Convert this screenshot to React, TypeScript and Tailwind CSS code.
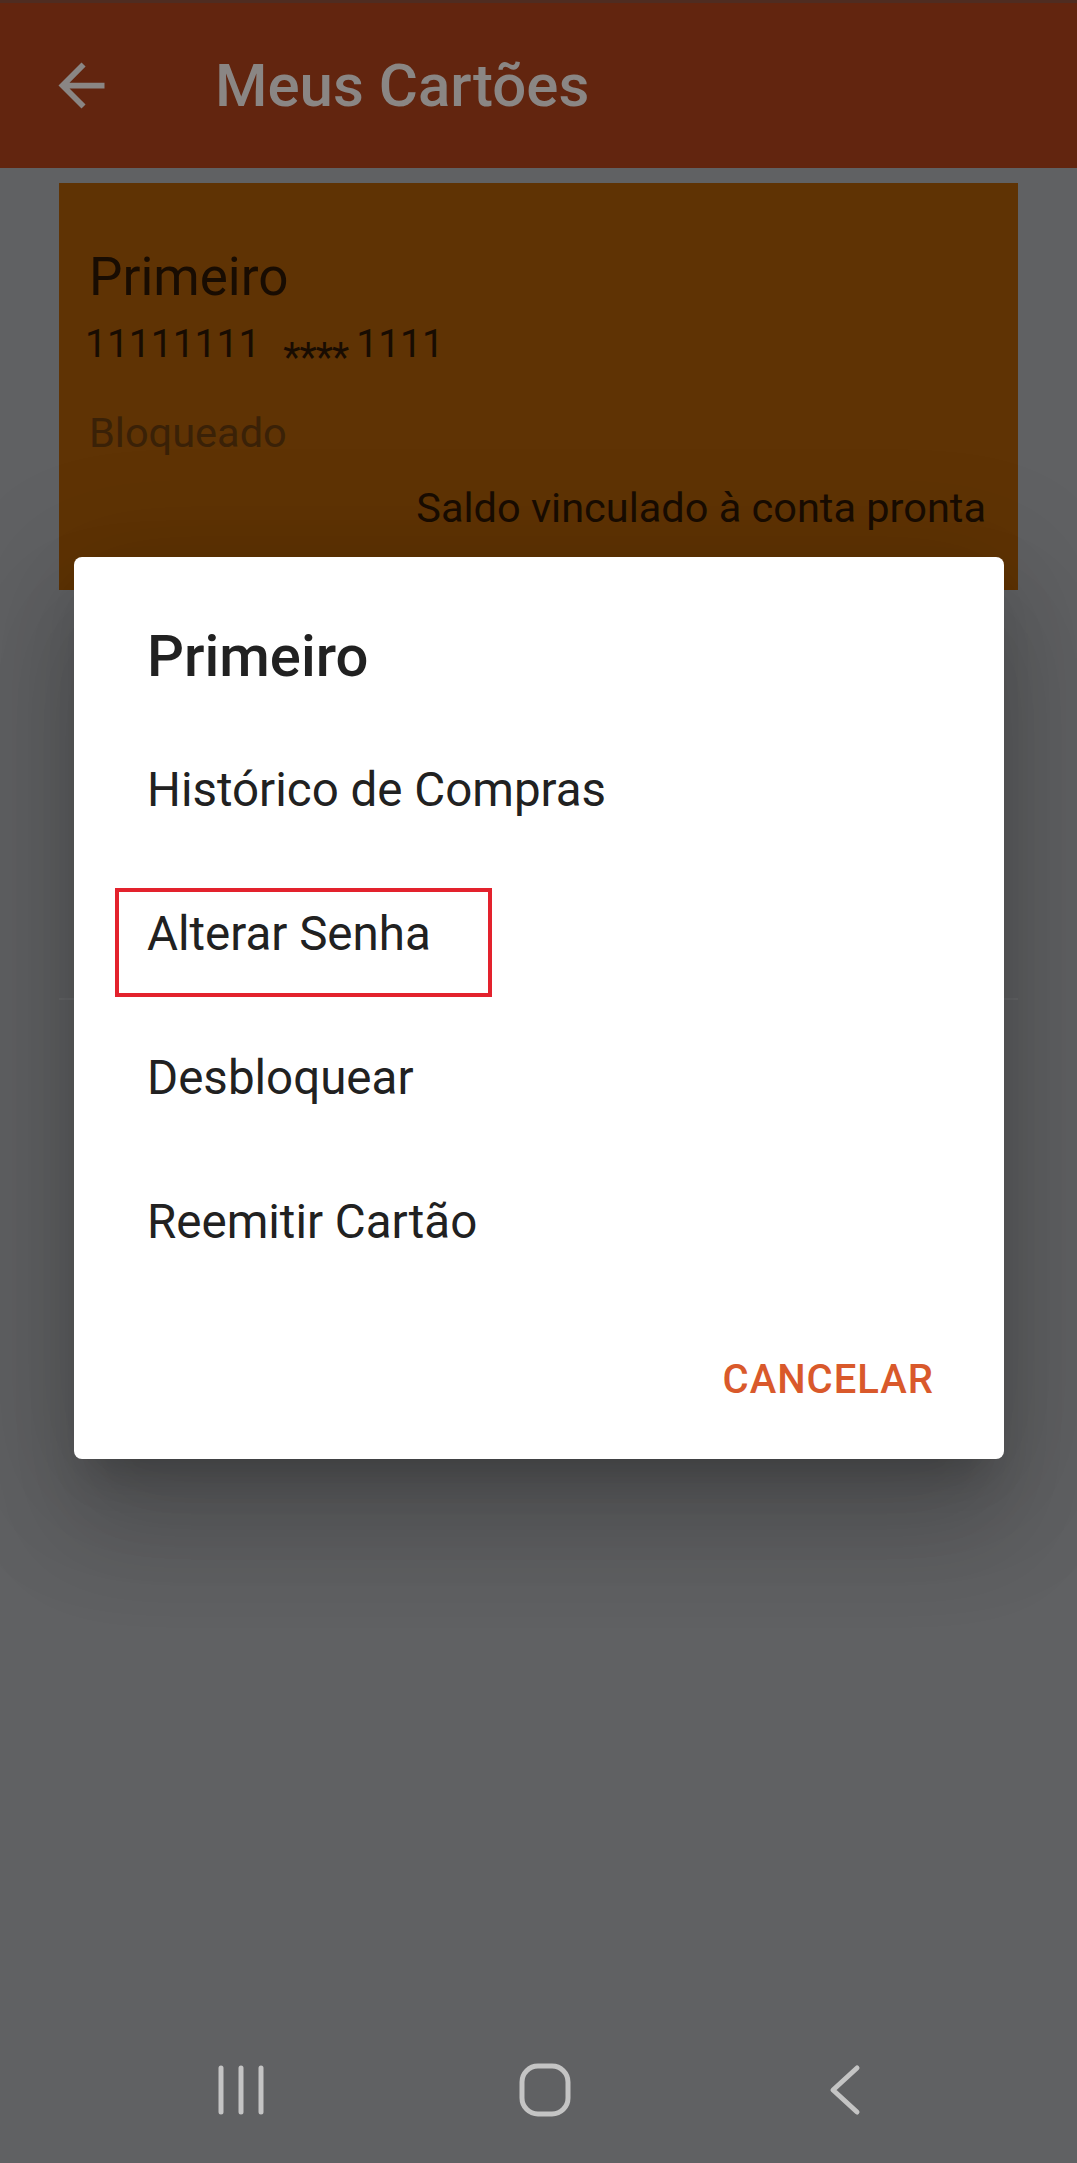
import React from "react";

function BackArrow() {
  return (
    <svg width="69" height="69" viewBox="0 0 24 24" className="block">
      <path d="M20 11H7.83l5.59-5.59L12 4l-8 8 8 8 1.41-1.41L7.83 13H20v-2z" fill="#8a8684" />
    </svg>
  );
}

function NavBar() {
  return (
    <div className="h-[146px] flex items-center pl-[216px]">
      <svg width="52" height="52" viewBox="0 0 52 52" className="block">
        <g stroke="#c4c4c4" strokeWidth="5" strokeLinecap="round">
          <line x1="5" y1="4" x2="5" y2="48" />
          <line x1="25" y1="4" x2="25" y2="48" />
          <line x1="45" y1="4" x2="45" y2="48" />
        </g>
      </svg>
      <svg width="54" height="54" viewBox="0 0 54 54" className="block ml-[250px]">
        <rect x="4" y="3" width="46" height="48" rx="16" fill="none" stroke="#c4c4c4" strokeWidth="5" />
      </svg>
      <svg width="34" height="52" viewBox="0 0 34 52" className="block ml-[256px]">
        <polyline points="29,4 5,26 29,48" fill="none" stroke="#c4c4c4" strokeWidth="5" strokeLinecap="round" strokeLinejoin="round" />
      </svg>
    </div>
  );
}

export default function App() {
  const items = ["Histórico de Compras", "Alterar Senha", "Desbloquear", "Reemitir Cartão"];
  return (
    <div className="relative w-[1077px] h-[2163px] overflow-hidden bg-[#606163] font-['Roboto',sans-serif] flex flex-col">
      {/* Status strip + App bar */}
      <div className="h-[3px] bg-[#4f2c21]" />
      <header className="h-[165px] bg-[#62250f] flex items-center pl-[47px]">
        <BackArrow />
        <h1 className="ml-[99px] mt-[1px] text-[60px] leading-[70px] font-medium text-[#8a8684]">Meus Cartões</h1>
      </header>

      {/* Content behind scrim */}
      <main className="flex-1 px-[59px] pt-[15px]">
        <div className="h-[407px] bg-[#5f3304] pl-[30px] pr-[32px] pt-[63px] flex flex-col">
          <div className="text-[53px] leading-[62px] text-[#180c02]">Primeiro</div>
          <div className="mt-[13px] text-[39px] leading-[46px] text-[#180c02] flex items-baseline">
            <span className="-ml-[4px]">11111111</span>
            <span className="ml-[23px] text-[40px] inline-block translate-y-[14px] tracking-[-1px]">****</span>
            <span className="ml-[8px]">1111</span>
          </div>
          <div className="mt-[42px] text-[41.5px] leading-[48px] text-[#3a2107]">Bloqueado</div>
          <div className="mt-[27px] text-[41.5px] leading-[48px] text-[#180c02] text-right">Saldo vinculado à conta pronta</div>
        </div>
        <div className="mt-[408px] h-[2px] bg-[#67686a]" />
      </main>

      <NavBar />

      {/* Dialog */}
      <div className="absolute left-[74px] top-[557px] w-[930px] h-[902px] bg-white rounded-[8px] shadow-[0_66px_104px_8px_rgba(0,0,0,0.14),0_25px_126px_22px_rgba(0,0,0,0.12),0_30px_41px_-19px_rgba(0,0,0,0.2)] flex flex-col pt-[65px]">
        <div className="pl-[73px] text-[58px] leading-[68px] font-medium text-[#212121]">Primeiro</div>
        <div className="mt-[28px] flex flex-col">
          {items.map((t) => (
            <div key={t} className="h-[144px] flex items-center pl-[73px] text-[47.5px] leading-[56px] text-[#212121]">
              {t}
            </div>
          ))}
        </div>
        <div className="mt-[25px] h-[120px] flex items-center justify-end pr-[70px]">
          <span className="text-[40px] leading-[47px] font-medium text-[#d9592b] tracking-[1px]">CANCELAR</span>
        </div>
        {/* annotation box */}
        <div className="absolute left-[41px] top-[331px] w-[377px] h-[109px] border-[4px] border-[#e3222d]" />
      </div>
    </div>
  );
}
